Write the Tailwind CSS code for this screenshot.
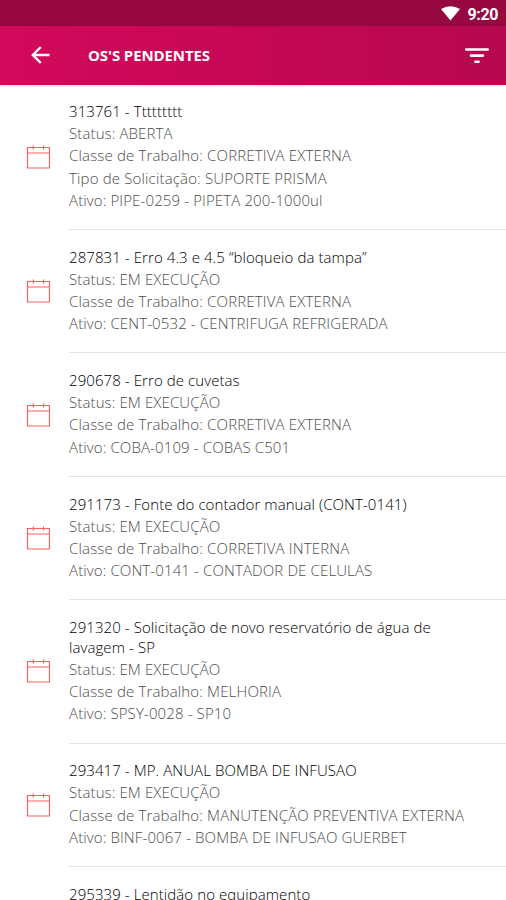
<!DOCTYPE html>
<html lang="pt-BR"><head><meta charset="utf-8"><title>OS's Pendentes</title>
<script src="https://cdn.jsdelivr.net/npm/@tailwindcss/browser@4"></script></head>
<body class="w-[506px] h-[900px] overflow-hidden bg-white font-['Open_Sans',sans-serif] font-light">
<div class="h-screen overflow-hidden flex flex-col">
<div class="h-[26px] shrink-0 bg-[#970840] flex items-center justify-end pr-2 gap-2 text-white">
<svg class="w-[19px] h-[15px]" viewBox="0 0 19 15" fill="currentColor"><path d="M0 3Q9.5-2.5 19 3L9.5 14.5Z"/></svg>
<span class="font-['Roboto',sans-serif] font-bold text-[16px] tracking-[-0.4px] leading-[26px] pt-[3px]">9:20</span></div>
<header class="h-[59px] shrink-0 bg-linear-to-r from-[#d3095c] via-[#c60754] to-[#b6084f] flex items-center text-white shadow pl-[31px] pr-[17px]">
<svg class="w-[19px] h-[18px] mb-px" viewBox="0 0 19 18" fill="none" stroke="currentColor" stroke-width="2.3"><path d="M18.500 9H2.500M9.800 1L1.800 9l8 8"/></svg>
<h1 class="ml-[38px] text-[15px] tracking-[-0.1px] font-bold flex-1">OS'S PENDENTES</h1>
<svg class="w-6 h-4" viewBox="0 0 24 16" fill="none" stroke="currentColor" stroke-width="2.6" stroke-linecap="round"><path d="M1.300 1.500h21.400M6 7.600h12M10.500 13.800h3"/></svg>
</header>
<main id="list" class="pl-[26px]"></main>
</div>
<script>
const items=[
["313761 - Ttttttttt","Status: ABERTA","Classe de Trabalho: CORRETIVA EXTERNA","Tipo de Solicitação: SUPORTE PRISMA","Ativo: PIPE-0259 - PIPETA 200-1000ul"],
["287831 - Erro 4.3 e 4.5 “bloqueio da tampa”","Status: EM EXECUÇÃO","Classe de Trabalho: CORRETIVA EXTERNA","Ativo: CENT-0532 - CENTRIFUGA REFRIGERADA"],
["290678 - Erro de cuvetas","Status: EM EXECUÇÃO","Classe de Trabalho: CORRETIVA EXTERNA","Ativo: COBA-0109 - COBAS C501"],
["291173 - Fonte do contador manual (CONT-0141)","Status: EM EXECUÇÃO","Classe de Trabalho: CORRETIVA INTERNA","Ativo: CONT-0141 - CONTADOR DE CELULAS"],
["291320 - Solicitação de novo reservatório de água de lavagem - SP","Status: EM EXECUÇÃO","Classe de Trabalho: MELHORIA","Ativo: SPSY-0028 - SP10"],
["293417 - MP. ANUAL BOMBA DE INFUSAO","Status: EM EXECUÇÃO","Classe de Trabalho: MANUTENÇÃO PREVENTIVA EXTERNA","Ativo: BINF-0067 - BOMBA DE INFUSAO GUERBET"],
["295339 - Lentidão no equipamento"]];
const tracking=x=>/^(Classe|Tipo)/.test(x)?'tracking-[0.16px]':'tracking-[0.12px]';
document.getElementById('list').innerHTML=items.map(([t,...r])=>`<article class="group flex items-center">${r.length?`<svg class="w-6 h-6 shrink-0 mr-[19px] mb-px" viewBox="0 0 24 24" fill="none" stroke="#f4625f" stroke-width="1.2"><path d="M1.500 2.500h22v20.500h-22zM1.500 8h22M7.300 .5v4M17.500 .5v4"/></svg>`:'<span class="w-6 shrink-0 mr-[19px]"></span>'}<div class="flex-1 border-b border-[#e2e2e2] pt-[16.8px] group-first:pt-[16.2px] pb-[18px] pr-[60px] text-[15px] [font-kerning:none] text-[#4c4c4c]"><h2 class="leading-[20px] mb-px tracking-[0.08px] text-[#000]">${t}</h2>${r.map(x=>`<p class="leading-[22.2px] whitespace-nowrap ${tracking(x)}">${x}</p>`).join('')}</div></article>`).join('');
</script></body></html>
